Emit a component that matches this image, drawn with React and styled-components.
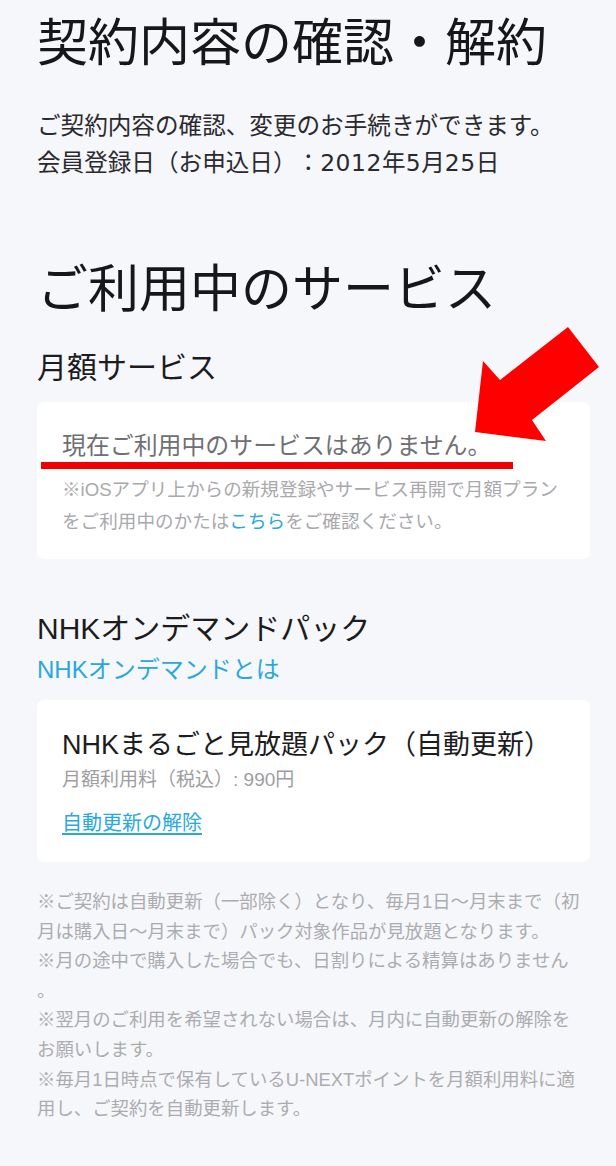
import styled, { createGlobalStyle } from 'styled-components';

const GlobalStyle = createGlobalStyle`
  html, body {
    margin: 0;
    padding: 0;
    background: #f6f7fa;
  }
  body {
    font-family: "Liberation Sans", "Noto Sans CJK JP", sans-serif;
    color: #1c1c1e;
    text-spacing-trim: space-all;
  }
`;

const Page = styled.div`
  position: relative;
  width: 616px;
  min-height: 1166px;
  box-sizing: border-box;
  padding: 14px 26px 40px 37px;
  background: #f6f7fa;
  overflow: hidden;
`;

const Heading = styled.h1`
  margin: ${({ top }) => top || 0}px 0 0;
  font-size: 51px;
  line-height: 60px;
  font-weight: 400;
  color: #17171a;
  white-space: nowrap;
`;

const Lead = styled.p`
  margin: 34px 0 0;
  font-size: 23.6px;
  line-height: 37px;
  color: #2a2a2e;
  white-space: nowrap;
`;

const Digits = styled.span`
  font-family: "DejaVu Sans", "Noto Sans CJK JP", sans-serif;
  font-size: 23.4px;
  letter-spacing: 0.6px;
`;

const SubHeading = styled.h2`
  margin: ${({ top }) => top}px 0 0;
  font-size: 30px;
  line-height: 40px;
  font-weight: 400;
  color: #1c1c1e;
  white-space: nowrap;
`;

const TextLink = styled.a`
  display: block;
  margin: 4px 0 0;
  font-size: 24px;
  line-height: 34px;
  color: #2aa8de;
  text-decoration: none;
`;

const Card = styled.div`
  position: relative;
  margin-top: ${({ top }) => top}px;
  padding: ${({ pad }) => pad};
  background: #ffffff;
  border-radius: 7px;
`;

const EmptyText = styled.p`
  margin: 0;
  font-size: 23.9px;
  line-height: 32px;
  color: #707074;
  white-space: nowrap;
`;

const RedMark = styled.div`
  position: absolute;
  left: 4px;
  top: 60px;
  width: 472px;
  height: 7px;
  background: #f00000;
`;

const CardNote = styled.p`
  margin: 12px 0 0;
  font-size: 18.6px;
  line-height: 32px;
  color: #a9a9ad;
  white-space: nowrap;
`;

const Inline = styled.span`
  color: #2aa8de;
`;

const PackTitle = styled.p`
  margin: 0;
  font-size: 27px;
  line-height: 36px;
  color: #1c1c1e;
  white-space: nowrap;
`;

const Price = styled.p`
  margin: 4px 0 0;
  font-size: 19px;
  line-height: 26px;
  color: #9d9da1;
`;

const CancelLink = styled.a`
  display: inline-block;
  margin-top: 16px;
  font-size: 20px;
  line-height: 28px;
  color: #2aa8de;
  text-decoration: underline;
  text-underline-offset: 3px;
`;

const Notes = styled.div`
  margin-top: 25px;
  font-size: 18.4px;
  line-height: 29.6px;
  color: #acacb0;
`;

const Line = styled.span`
  display: block;
  white-space: nowrap;
`;

const Arrow = styled.svg`
  position: absolute;
  left: 0;
  top: 0;
  pointer-events: none;
`;

const footnotes = [
  '※ご契約は自動更新（一部除く）となり、毎月1日〜月末まで（初',
  '月は購入日〜月末まで）パック対象作品が見放題となります。',
  '※月の途中で購入した場合でも、日割りによる精算はありません',
  '。',
  '※翌月のご利用を希望されない場合は、月内に自動更新の解除を',
  'お願いします。',
  '※毎月1日時点で保有しているU-NEXTポイントを月額利用料に適',
  '用し、ご契約を自動更新します。',
];

export default function App() {
  return (
    <>
      <GlobalStyle />
      <Page>
        <Heading>契約内容の確認・解約</Heading>
        <Lead>
          ご契約内容の確認、変更のお手続きができます。
          <br />
          会員登録日（お申込日）：<Digits>2012</Digits>年<Digits>5</Digits>月
          <Digits>25</Digits>日
        </Lead>

        <Heading top={78}>ご利用中のサービス</Heading>
        <SubHeading top={28}>月額サービス</SubHeading>
        <Card top={14} pad="28px 24px 21px 25px">
          <EmptyText>現在ご利用中のサービスはありません。</EmptyText>
          <RedMark />
          <CardNote>
            ※iOSアプリ上からの新規登録やサービス再開で月額プラン
            <br />
            をご利用中のかたは<Inline>こちら</Inline>をご確認ください。
          </CardNote>
        </Card>

        <SubHeading top={50}>NHKオンデマンドパック</SubHeading>
        <TextLink>NHKオンデマンドとは</TextLink>
        <Card top={13} pad="27px 24px 25px 25px">
          <PackTitle>NHKまるごと見放題パック（自動更新）</PackTitle>
          <Price>月額利用料（税込）: 990円</Price>
          <CancelLink>自動更新の解除</CancelLink>
        </Card>

        <Notes>
          {footnotes.map((line, i) => (
            <Line key={i}>{line}</Line>
          ))}
        </Notes>

        <Arrow width="616" height="1166" viewBox="0 0 616 1166">
          <polygon
            points="475,432 483,361 500,380 568,327 599,367 532,420 546,441"
            fill="#ff0000"
          />
        </Arrow>
      </Page>
    </>
  );
}
